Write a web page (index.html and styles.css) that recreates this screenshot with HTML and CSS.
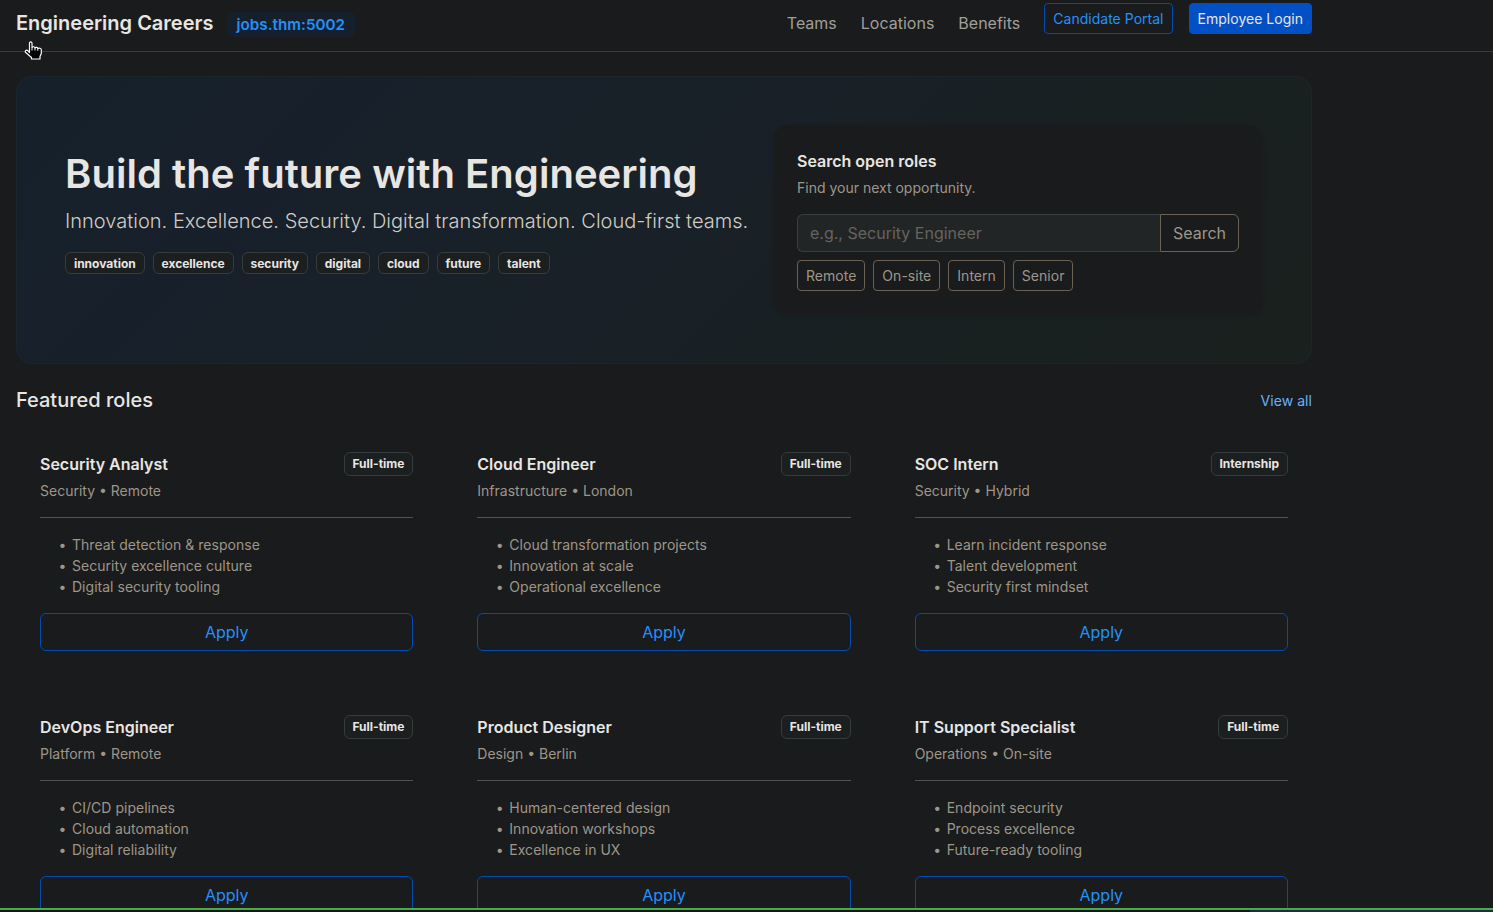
FILE: index.html
```
<!DOCTYPE html>
<html lang="en">
<head>
    <meta charset="UTF-8">
    <meta name="viewport" content="width=device-width, initial-scale=1.0">
    <title>Engineering Careers</title>
    <link rel="stylesheet" href="styles.css">
</head>
<body>
    <nav class="navbar">
        <div class="container navbar-inner">
            <a class="brand" href="#">Engineering Careers</a>
            <span class="host">jobs.thm:5002</span>
            <div class="nav-links">
                <a class="nav-link" href="#">Teams</a>
                <a class="nav-link" href="#">Locations</a>
                <a class="nav-link" href="#">Benefits</a>
                <a class="btn btn-sm btn-outline-primary" href="#">Candidate Portal</a>
                <a class="btn btn-sm btn-primary" href="#">Employee Login</a>
            </div>
        </div>
    </nav>

    <main class="container">
        <section class="hero">
            <div class="hero-text">
                <h1>Build the future with Engineering</h1>
                <p class="lead">Innovation. Excellence. Security. Digital transformation. Cloud-first teams.</p>
                <div class="badges">
                    <span class="badge">innovation</span>
                    <span class="badge">excellence</span>
                    <span class="badge">security</span>
                    <span class="badge">digital</span>
                    <span class="badge">cloud</span>
                    <span class="badge">future</span>
                    <span class="badge">talent</span>
                </div>
            </div>
            <div class="search-card">
                <h6>Search open roles</h6>
                <p class="small">Find your next opportunity.</p>
                <div class="input-group">
                    <input type="text" placeholder="e.g., Security Engineer">
                    <button class="btn btn-outline">Search</button>
                </div>
                <div class="filters">
                    <button class="btn btn-sm btn-outline">Remote</button>
                    <button class="btn btn-sm btn-outline">On-site</button>
                    <button class="btn btn-sm btn-outline">Intern</button>
                    <button class="btn btn-sm btn-outline">Senior</button>
                </div>
            </div>
        </section>

        <div class="section-head">
            <h5>Featured roles</h5>
            <a href="#">View all</a>
        </div>

        <section class="roles">
            <div class="card">
                <div class="card-head"><h6>Security Analyst</h6><span class="badge">Full-time</span></div>
                <div class="small">Security • Remote</div>
                <hr>
                <ul>
                    <li>Threat detection &amp; response</li>
                    <li>Security excellence culture</li>
                    <li>Digital security tooling</li>
                </ul>
                <a class="btn btn-outline-primary btn-block" href="#">Apply</a>
            </div>
            <div class="card">
                <div class="card-head"><h6>Cloud Engineer</h6><span class="badge">Full-time</span></div>
                <div class="small">Infrastructure • London</div>
                <hr>
                <ul>
                    <li>Cloud transformation projects</li>
                    <li>Innovation at scale</li>
                    <li>Operational excellence</li>
                </ul>
                <a class="btn btn-outline-primary btn-block" href="#">Apply</a>
            </div>
            <div class="card">
                <div class="card-head"><h6>SOC Intern</h6><span class="badge">Internship</span></div>
                <div class="small">Security • Hybrid</div>
                <hr>
                <ul>
                    <li>Learn incident response</li>
                    <li>Talent development</li>
                    <li>Security first mindset</li>
                </ul>
                <a class="btn btn-outline-primary btn-block" href="#">Apply</a>
            </div>
            <div class="card">
                <div class="card-head"><h6>DevOps Engineer</h6><span class="badge">Full-time</span></div>
                <div class="small">Platform • Remote</div>
                <hr>
                <ul>
                    <li>CI/CD pipelines</li>
                    <li>Cloud automation</li>
                    <li>Digital reliability</li>
                </ul>
                <a class="btn btn-outline-primary btn-block" href="#">Apply</a>
            </div>
            <div class="card">
                <div class="card-head"><h6>Product Designer</h6><span class="badge">Full-time</span></div>
                <div class="small">Design • Berlin</div>
                <hr>
                <ul>
                    <li>Human-centered design</li>
                    <li>Innovation workshops</li>
                    <li>Excellence in UX</li>
                </ul>
                <a class="btn btn-outline-primary btn-block" href="#">Apply</a>
            </div>
            <div class="card">
                <div class="card-head"><h6>IT Support Specialist</h6><span class="badge">Full-time</span></div>
                <div class="small">Operations • On-site</div>
                <hr>
                <ul>
                    <li>Endpoint security</li>
                    <li>Process excellence</li>
                    <li>Future-ready tooling</li>
                </ul>
                <a class="btn btn-outline-primary btn-block" href="#">Apply</a>
            </div>
        </section>
    </main>

    <!-- hand pointer -->
    <svg class="pointer" width="19" height="20" viewBox="0 0 19 20">
        <path d="M5.5 11.5V2.2C5.5 .5 8 .5 8 2.2V6.5C8.6 5.3 10.8 5.6 11 6.8C11.8 5.9 13.6 6.3 13.8 7.5C15 6.8 17.3 7.2 17.3 8.8V12.5L16 15.5V18H7.5V16.5L1.5 11.3C.5 9.6 2.6 8.5 4 9.8Z" fill="#000" stroke="#fff" stroke-width="1.2" stroke-linejoin="round"/>
        <path d="M8 6.5V9.5M11 7V9.5M13.8 7.5V9.8" stroke="#fff" stroke-width="1"/>
    </svg>
    <div class="bottom-bar"></div>
</body>
</html>
```
FILE: styles.css
```
* {
    box-sizing: border-box;
}

body {
    margin: 0;
    height: 912px;
    overflow: hidden;
    background-color: #1a1b1c;
    color: #e8e6e3;
    font-family: Inter, "Liberation Sans", sans-serif;
    font-size: 16px;
    line-height: 1.5;
}

h1, h5, h6, p, ul {
    margin: 0;
}

a {
    text-decoration: none;
}

.container {
    width: 1312px;
    padding-left: 16px;
}

.navbar {
    height: 52px;
    border-bottom: 1px solid #3a3d3f;
}

.navbar-inner {
    display: flex;
    align-items: flex-start;
}

.brand {
    margin-top: 8px;
    color: #e8e6e3;
    font-size: 20px;
    font-weight: 600;
}

.host {
    margin: 12px 0 0 14px;
    padding: 2px 9.5px 0 9px;
    border-radius: 6px;
    background-color: #16202c;
    color: #2490fa;
    font-size: 15.2px;
    font-weight: 600;
    letter-spacing: 0.04px;
}

.nav-links {
    display: flex;
    align-items: flex-start;
    margin-left: auto;
    padding-top: 3px;
}

.nav-link {
    margin: 8px 24px 0 0;
    color: #a09f9b;
}

.nav-links .btn + .btn {
    margin-left: 16px;
}

.btn {
    display: inline-block;
    padding: 6px 12px;
    border: 1px solid transparent;
    border-radius: 6px;
    background: none;
    font-family: inherit;
    font-size: 16px;
    line-height: 1.5;
    text-align: center;
}

.btn-sm {
    padding: 4px 8px;
    border-radius: 4px;
    font-size: 14px;
    letter-spacing: 0.02px;
}

.btn-primary {
    background-color: #0250c5;
    border-color: #0250c5;
    color: #e8e6e3;
}

.btn-outline-primary {
    border-color: #024bb0;
    color: #2490fa;
}

.btn-outline {
    border-color: #6b6155;
    color: #9e9689;
}

.btn-block {
    display: block;
}

.hero {
    display: flex;
    align-items: center;
    justify-content: space-between;
    margin-top: 24px;
    height: 288px;
    padding: 48px;
    border: 1px solid #1c272b;
    border-radius: 16px;
    background: linear-gradient(135deg, #16202c, #192028 50%, #182021 75%, #1a201e);
}

.hero-text {
    padding-bottom: 16px;
}

.hero h1 {
    margin-bottom: 8px;
    font-size: 40px;
    font-weight: 600;
    line-height: 1.2;
    letter-spacing: 0.03px;
}

.lead {
    margin-bottom: 16px;
    color: #d0ccc6;
    font-size: 20px;
    font-weight: 300;
    letter-spacing: 0.015px;
    white-space: nowrap;
}

.badges {
    display: flex;
    gap: 8px;
}

.badge {
    padding: 5px 7.9px 3.4px;
    border: 1px solid #363b3d;
    border-radius: 6px;
    background-color: #1b1f20;
    color: #e8e6e3;
    font-size: 12px;
    font-weight: 700;
    line-height: 1;
}

.search-card {
    width: 490px;
    padding: 24px;
    border-radius: 16px;
    background-color: #1a1b1c;
    box-shadow: 0 2px 4px rgba(0, 0, 0, 0.08);
}

h6 {
    font-size: 16px;
    font-weight: 600;
}

.small {
    margin-top: 4px;
    color: #9e9689;
    font-size: 14px;
}

.input-group {
    display: flex;
    margin: 16px 0 8px;
}

.input-group input {
    flex: 1;
    height: 38px;
    padding: 6px 12px;
    border: 1px solid #3a3e40;
    border-right: 0;
    border-radius: 6px 0 0 6px;
    background-color: #222526;
    font-family: inherit;
    font-size: 16px;
}

.input-group input::placeholder {
    color: #65635f;
}

.input-group .btn {
    border-radius: 0 6px 6px 0;
}

.filters {
    display: flex;
    gap: 8px;
}

.section-head {
    display: flex;
    align-items: center;
    justify-content: space-between;
    height: 24px;
    margin: 24px 0 16px;
}

.section-head h5 {
    font-size: 20px;
    font-weight: 500;
    line-height: 1.2;
}

.section-head a {
    color: #66b2fa;
    font-size: 14px;
    letter-spacing: 0.05px;
}

.roles {
    display: grid;
    grid-template-columns: repeat(3, 1fr);
    gap: 16px;
}

.card {
    padding: 24px;
}

.card-head {
    display: flex;
    justify-content: space-between;
    height: 24px;
}

.card-head .badge {
    padding-top: 5.2px;
}

hr {
    height: 1px;
    margin: 16px 0;
    border: 0;
    background-color: #525251;
}

ul {
    margin-bottom: 16px;
    padding-left: 32px;
    color: #9e9689;
    font-size: 14px;
    letter-spacing: 0.02px;
    list-style: none;
}

li::before {
    content: "•";
    display: inline-block;
    width: 13.5px;
    margin-left: -13.5px;
}

.pointer {
    position: absolute;
    left: 24px;
    top: 41px;
}

.bottom-bar {
    position: absolute;
    left: 0;
    right: 0;
    bottom: 0;
    height: 4px;
    border-top: 2px solid #48ac4d;
    background: linear-gradient(to right, #15161a 1250px, #1f2c40 1250px);
}
```
